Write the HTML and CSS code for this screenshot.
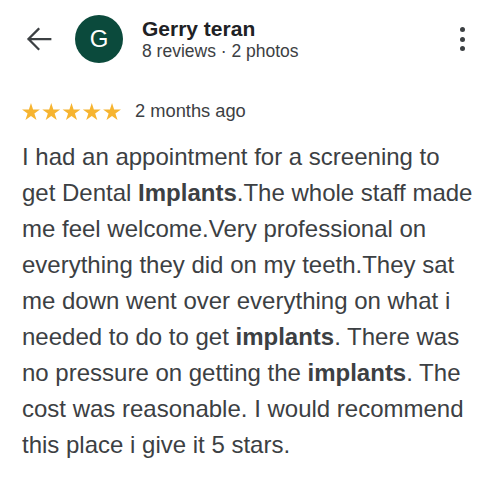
FILE: index.html
```html
<!DOCTYPE html>
<html>
<head>
<meta charset="utf-8">
<link rel="stylesheet" href="styles.css">
</head>
<body>
<div class="review">
  <header class="head">
    <button class="back" aria-label="Back">
      <svg width="36" height="36" viewBox="0 0 24 24"><path d="M19.5 12H5.2M11.6 5.4L5 12l6.6 6.6" fill="none" stroke="#3c4043" stroke-width="1.5" stroke-linecap="square"/></svg>
    </button>
    <div class="avatar">G</div>
    <div class="who">
      <div class="name">Gerry teran</div>
      <div class="meta">8 reviews · 2 photos</div>
    </div>
    <button class="more" aria-label="More">
      <span class="dot"></span><span class="dot"></span><span class="dot"></span>
    </button>
  </header>
  <div class="rating">
    <svg class="stars" width="101" height="17" viewBox="0 0 101 17.2">
      <defs><polygon id="st" points="9.5,0 11.634,6.563 18.535,6.564 12.952,10.622 15.084,17.186 9.5,13.13 3.916,17.186 6.048,10.622 0.465,6.564 7.366,6.563"/></defs>
      <use href="#st" x="0"/><use href="#st" x="20.5"/><use href="#st" x="41"/><use href="#st" x="61.5"/><use href="#st" x="82"/>
    </svg>
    <span class="when">2 months ago</span>
  </div>
  <p class="text">I had an appointment for a screening to get Dental <b>Implants</b>.The whole staff made me feel welcome.Very professional on everything they did on my teeth.They sat me down went over everything on what i needed to do to get <b>implants</b>. There was no pressure on getting the <b>implants</b>. The cost was reasonable. I would recommend this place i give it 5 stars.</p>
</div>
</body>
</html>
```
FILE: styles.css
```css
html, body {
  margin: 0;
  padding: 0;
  background: #ffffff;
}
body {
  font-family: "Liberation Sans", Arial, sans-serif;
  color: #3c4043;
}
.review {
  width: 498px;
  padding: 0 22px;
  box-sizing: border-box;
}
.head {
  display: flex;
  align-items: center;
  padding-top: 15px;
  height: 48px;
}
.back {
  width: 36px;
  height: 36px;
  margin-left: -1px;
  padding: 0;
  border: 0;
  background: none;
  display: flex;
}
.avatar {
  width: 48px;
  height: 48px;
  border-radius: 50%;
  background: #0b4a3c;
  color: #ffffff;
  font-size: 24px;
  line-height: 48px;
  text-align: center;
  margin-left: 18px;
  flex: none;
}
.who {
  margin-left: 19px;
  flex: 1;
}
.name {
  font-size: 21px;
  line-height: 24px;
  font-weight: 700;
  color: #202124;
}
.meta {
  font-size: 17.5px;
  line-height: 21px;
  color: #3c4043;
}
.more {
  width: 10px;
  height: 24px;
  padding: 0;
  border: 0;
  background: none;
  display: flex;
  flex-direction: column;
  align-items: center;
  justify-content: space-between;
  margin-right: 9px;
}
.dot {
  width: 5px;
  height: 5px;
  border-radius: 50%;
  background: #3c4043;
}
.rating {
  display: flex;
  align-items: center;
  margin-top: 36px;
  height: 24px;
}
.stars {
  fill: #f6b430;
  margin-left: -1px;
  margin-top: 1px;
}
.when {
  margin-left: 13px;
  font-size: 18.3px;
  line-height: 24px;
  color: #3c4043;
}
.text {
  margin: 16px 0 0;
  font-size: 24px;
  line-height: 36px;
  color: #3c4043;
}
.text b {
  font-weight: 700;
}
```
